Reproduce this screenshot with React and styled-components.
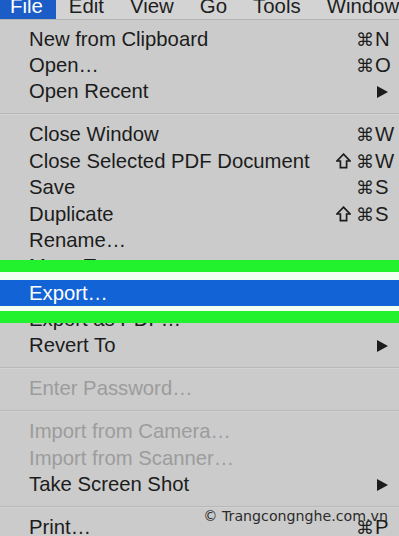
import React from "react";
import styled, { createGlobalStyle } from "styled-components";

const Global = createGlobalStyle`
  html, body { margin: 0; padding: 0; height: 536px; overflow: hidden; }
  body { background: #cbcbcb; font-family: "Liberation Sans", "DejaVu Sans", Arial, sans-serif; }
  #root { position: relative; height: 536px; overflow: hidden; }
`;

const Page = styled.div`
  position: relative;
  width: 399px;
  height: 536px;
  overflow: hidden;
  background: #cbcbcb;
`;

const MenuBar = styled.div`
  display: flex;
  align-items: flex-end;
  height: 19px;
  overflow: hidden;
  background: #d3d3d3;
  border-bottom: 1px solid #b4b4b4;
`;

const MenuTitle = styled.div`
  flex: none;
  font-size: 20.4px;
  line-height: 26px;
  padding: 0 13px 0 ${(p) => (p.$first ? "10px" : "13px")};
  color: ${(p) => (p.$active ? "#ffffff" : "#1e1e1e")};
  background: ${(p) => (p.$active ? "#1c5cc6" : "transparent")};
  white-space: nowrap;
`;

const Menu = styled.div`
  display: flex;
  flex-direction: column;
  padding-top: 6px;
  border-left: 2px solid #bdbdbd;
  margin-left: -2px;
`;

const Row = styled.div`
  position: relative;
  z-index: ${(p) => (p.$selected ? 2 : "auto")};
  display: flex;
  align-items: center;
  height: 26.4px;
  padding-left: 29px;
  font-size: 20.3px;
  color: ${(p) => (p.$disabled ? "#9c9c9c" : p.$selected ? "#ffffff" : "#1c1c1c")};
  background: ${(p) => (p.$selected ? "#1263d6" : "transparent")};
  white-space: nowrap;

  ${(p) =>
    p.$selected &&
    `
    &::before {
      content: "";
      position: absolute;
      left: 0; right: 0;
      top: -20px;
      height: 20px;
      background: linear-gradient(#22f22d 0 12px, #f4fff4 12px 100%);
    }
    &::after {
      content: "";
      position: absolute;
      left: 0; right: 0;
      bottom: -17px;
      height: 17px;
      background: linear-gradient(#f4fff4 0 4.5px, #22f22d 4.5px 100%);
    }
  `}
`;

const Label = styled.span`
  flex: 1;
`;

const Mods = styled.span`
  display: flex;
  align-items: center;
  font-family: "DejaVu Sans", sans-serif;
  font-size: 18px;
`;

const Key = styled.span`
  width: 24px;
  flex: none;
  display: flex;
  align-items: center;
  padding-left: 1px;
`;

const Separator = styled.div`
  height: 16.5px;
  display: flex;
  align-items: center;
  &::after {
    content: "";
    flex: 1;
    height: 1px;
    background: #b8b8b8;
    box-shadow: 0 1px 0 #d2d2d2;
  }
`;

const Watermark = styled.div`
  position: absolute;
  right: 11px;
  top: 508px;
  font-family: "DejaVu Sans", sans-serif;
  font-size: 14.2px;
  color: #2c2c2c;
  white-space: nowrap;
`;

const ShiftSvg = styled.svg`
  margin-right: 5px;
  flex: none;
`;

const Arrow = () => (
  <svg width="11" height="12" viewBox="0 0 11 12" style={{ marginLeft: 2 }}>
    <polygon points="0,0 11,6 0,12" fill="#1c1c1c" />
  </svg>
);

const Shift = () => (
  <ShiftSvg width="15" height="16" viewBox="0 0 15 16">
    <path
      d="M7.5 1.2 L14 8 L10.6 8 L10.6 14.6 L4.4 14.6 L4.4 8 L1 8 Z"
      fill="none"
      stroke="#1c1c1c"
      strokeWidth="1.7"
      strokeLinejoin="miter"
    />
  </ShiftSvg>
);

const items = [
  { label: "New from Clipboard", cmd: true, key: "N" },
  { label: "Open…", cmd: true, key: "O" },
  { label: "Open Recent", arrow: true },
  "sep",
  { label: "Close Window", cmd: true, key: "W" },
  { label: "Close Selected PDF Document", shift: true, cmd: true, key: "W" },
  { label: "Save", cmd: true, key: "S" },
  { label: "Duplicate", shift: true, cmd: true, key: "S" },
  { label: "Rename…" },
  { label: "Move To…" },
  { label: "Export…", selected: true },
  { label: "Export as PDF…" },
  { label: "Revert To", arrow: true },
  "sep",
  { label: "Enter Password…", disabled: true },
  "sep",
  { label: "Import from Camera…", disabled: true },
  { label: "Import from Scanner…", disabled: true },
  { label: "Take Screen Shot", arrow: true },
  "sep",
  { label: "Print…", cmd: true, key: "P" },
];

const titles = ["File", "Edit", "View", "Go", "Tools", "Window"];

export default function App() {
  return (
    <Page>
      <Global />
      <MenuBar>
        {titles.map((t, i) => (
          <MenuTitle key={t} $first={i === 0} $active={i === 0}>
            {t}
          </MenuTitle>
        ))}
      </MenuBar>
      <Menu>
        {items.map((it, i) =>
          it === "sep" ? (
            <Separator key={i} />
          ) : (
            <Row key={i} $disabled={it.disabled} $selected={it.selected}>
              <Label>{it.label}</Label>
              <Mods>
                {it.shift && <Shift />}
                {it.cmd ? "⌘" : ""}
              </Mods>
              <Key>{it.arrow ? <Arrow /> : it.key || ""}</Key>
            </Row>
          )
        )}
      </Menu>
      <Watermark>© Trangcongnghe.com.vn</Watermark>
    </Page>
  );
}
